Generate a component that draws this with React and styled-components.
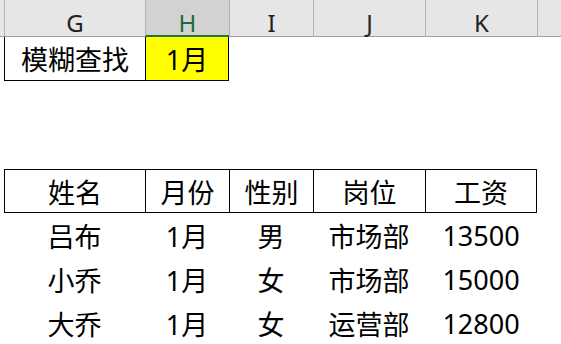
import React from "react";
import styled, { createGlobalStyle } from "styled-components";

const Global = createGlobalStyle`
  html, body { margin: 0; padding: 0; background: #fff; }
  body { font-family: "Noto Sans", "Noto Sans CJK SC", sans-serif; }
`;

const Sheet = styled.div`
  display: grid;
  grid-template-columns: 4px 141px 84px 84px 112px 112px 24px;
  grid-template-rows: 37px;
  grid-auto-rows: 44px;
  width: 561px;
  height: 344px;
  overflow: hidden;
`;

const ColHead = styled.div`
  box-sizing: border-box;
  background: ${(p) => (p.$active ? "#d2d2d2" : "#e6e6e6")};
  border-bottom: ${(p) => (p.$active ? "2px solid #217346" : "1px solid #9e9e9e")};
  border-left: ${(p) => (p.$sep ? "1px solid #b4b4b4" : "none")};
  display: flex;
  align-items: center;
  justify-content: center;
  padding-top: 9px;
  font-family: "Noto Sans", "Open Sans", sans-serif;
  font-size: 24px;
  color: ${(p) => (p.$active ? "#1d6a40" : "#222")};
`;

const Cell = styled.div`
  box-sizing: border-box;
  display: flex;
  align-items: center;
  justify-content: center;
  font-family: "Noto Sans", "Noto Sans CJK SC", sans-serif;
  font-size: 27px;
  color: #000;
  background: ${(p) => p.$fill || "transparent"};
  border-top: ${(p) => (p.$t ? "1px solid #000" : "none")};
  border-left: ${(p) => (p.$l ? "1px solid #000" : "none")};
  border-right: ${(p) => (p.$r ? "1px solid #000" : "none")};
  border-bottom: ${(p) => (p.$b ? "1px solid #000" : "none")};
`;

const Blank = styled.div``;

const cols = ["G", "H", "I", "J", "K"];
const heads = ["姓名", "月份", "性别", "岗位", "工资"];
const rows = [
  ["吕布", "1月", "男", "市场部", "13500"],
  ["小乔", "1月", "女", "市场部", "15000"],
  ["大乔", "1月", "女", "运营部", "12800"],
];

export default function App() {
  return (
    <>
      <Global />
      <Sheet>
        <ColHead />
        {cols.map((c) => (
          <ColHead key={c} $sep $active={c === "H"}>
            {c}
          </ColHead>
        ))}
        <ColHead $sep />

        <Blank />
        <Cell $l $b>模糊查找</Cell>
        <Cell $l $r $b $fill="#ffff00">1月</Cell>
        <Blank />
        <Blank />
        <Blank />
        <Blank />

        {[0, 1].map((r) =>
          Array.from({ length: 7 }).map((_, i) => <Blank key={`e${r}-${i}`} />)
        )}

        <Blank />
        {heads.map((h, i) => (
          <Cell key={h} $t $l $b $r={i === heads.length - 1}>
            {h}
          </Cell>
        ))}
        <Blank />

        {rows.map((row, ri) => (
          <React.Fragment key={ri}>
            <Blank />
            {row.map((v, i) => (
              <Cell key={i}>{v}</Cell>
            ))}
            <Blank />
          </React.Fragment>
        ))}
      </Sheet>
    </>
  );
}
